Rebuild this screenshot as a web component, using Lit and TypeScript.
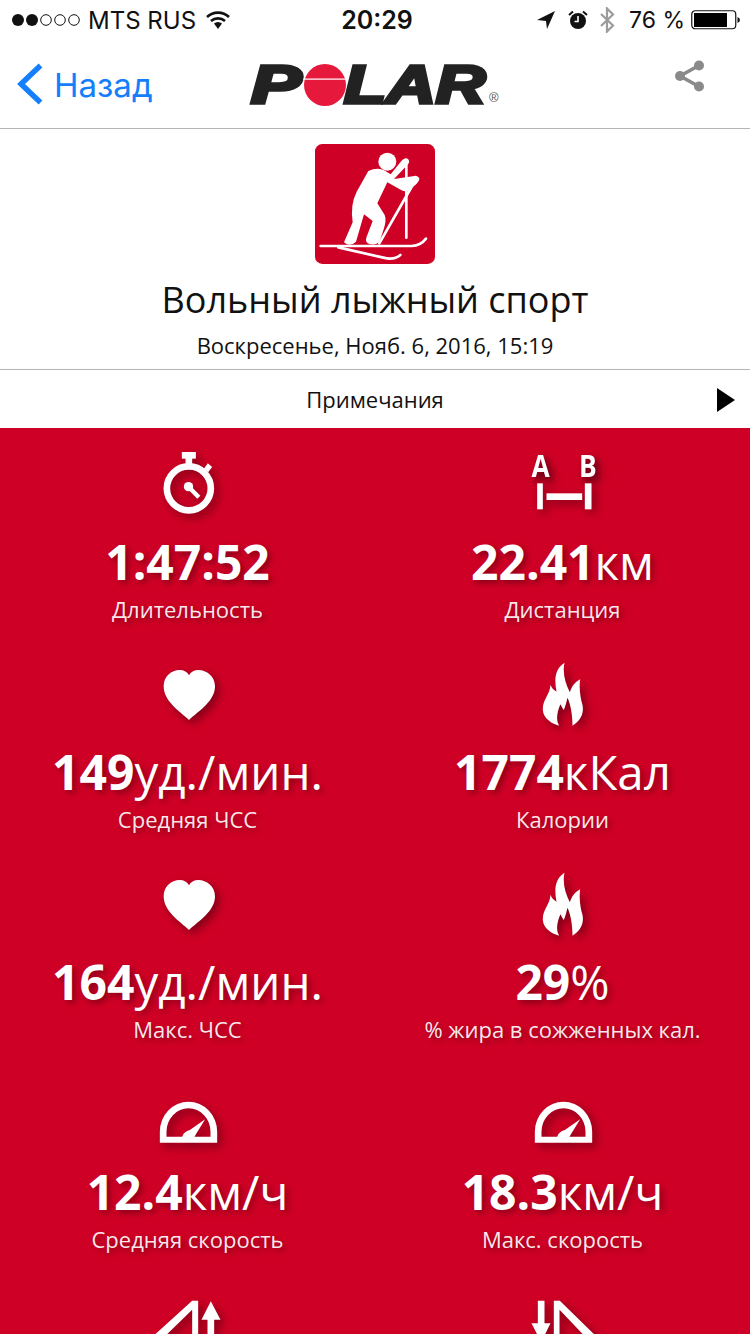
import { LitElement, html, css, svg } from "lit";
import { customElement } from "lit/decorators.js";

// icons are drawn in 3x coordinates on a 240x216 canvas
const heart = svg`<path d="M123 186 C95 160 47 130 47 85 C47 55 70 36 95 36 C108 36 118 42 123 52 C128 42 138 36 151 36 C176 36 201 55 201 85 C201 130 151 160 123 186 Z" fill="#fff"/>`;

const stopwatch = svg`<g transform="translate(-52.5,-24)">
  <circle cx="175" cy="145" r="66" fill="none" stroke="#fff" stroke-width="20"/>
  <rect x="154" y="36" width="42" height="20" fill="#fff"/>
  <rect x="165" y="50" width="20" height="22" fill="#fff"/>
  <path d="M220 86 L232 70 L245 81 L233 97 Z" fill="#fff"/>
  <circle cx="174" cy="140" r="14" fill="#fff"/>
  <path d="M174 140 L205 172" stroke="#fff" stroke-width="13" fill="none"/>
</g>`;

const abBars = svg`<g transform="translate(-37.5,-24)">
  <text x="90" y="112" text-anchor="middle" class="ab" transform="translate(90 0) scale(.86 1) translate(-90 0)">A</text>
  <text x="232" y="112" text-anchor="middle" class="ab" transform="translate(232 0) scale(.86 1) translate(-232 0)">B</text>
  <rect x="80" y="130" width="17" height="78" fill="#fff"/>
  <rect x="223" y="130" width="20" height="78" fill="#fff"/>
  <rect x="108" y="160" width="107" height="20" fill="#fff"/>
</g>`;

const flame = svg`<g transform="translate(-37.5,-24)">
  <path fill="#fff" d="M162 38 C135 55 130 85 138 125 C130 120 122 112 120 104 C118 135 95 150 97 180 C98 205 125 222 146 227 C135 210 140 185 150 163 C154 172 158 178 160 180 C165 168 168 155 171 143 C181 165 186 195 186 227 C205 215 222 195 216 165 C210 145 205 115 209 88 C196 95 185 105 178 127 C165 100 155 70 162 38 Z"/>
</g>`;

const gauge = svg`<g transform="translate(-52.5,36)">
  <path fill="#fff" fill-rule="evenodd" d="M88 158 V125 A86 90 0 0 1 260 125 V158 Z M108 140 H155 Q160 125 178 120 L224 88 L198 130 L192 140 H240 V125 A66 70 0 0 0 108 125 Z"/>
</g>`;

const climb = svg`<g transform="translate(-52.5,3)">
  <path fill="#fff" d="M185 35 H203 V200 H185 V62 L95 150 L75 135 Z"/>
  <path fill="#fff" d="M241 37 L270 92 H251 V200 H231 V92 H213 Z"/>
</g>`;

const descent = svg`<g transform="translate(-1177.5,3)">
  <path fill="#fff" d="M1222 35 H1242 V103 H1260 L1232 160 L1203 103 H1222 Z"/>
  <path fill="#fff" d="M1270 35 H1288 L1400 145 L1380 160 L1287 62 V200 H1270 Z"/>
</g>`;

const rows = [
  [
    { icon: stopwatch, value: "1:47:52", unit: "", label: "Длительность" },
    { icon: abBars, value: "22.41", unit: "км", label: "Дистанция" },
  ],
  [
    { icon: heart, value: "149", unit: "уд./мин.", label: "Средняя ЧСС" },
    { icon: flame, value: "1774", unit: "кКал", label: "Калории" },
  ],
  [
    { icon: heart, value: "164", unit: "уд./мин.", label: "Макс. ЧСС" },
    { icon: flame, value: "29", unit: "%", label: "% жира в сожженных кал." },
  ],
  [
    { icon: gauge, value: "12.4", unit: "км/ч", label: "Средняя скорость" },
    { icon: gauge, value: "18.3", unit: "км/ч", label: "Макс. скорость" },
  ],
];

@customElement("app-root")
export class AppRoot extends LitElement {
  static styles = css`
    :host {
      display: block;
      height: 1334px;
      overflow: hidden;
      background: #fff;
      font-family: "Open Sans", sans-serif;
      color: #111;
    }

    .status {
      display: grid;
      grid-template-columns: 1fr auto 1fr;
      align-items: center;
      height: 40px;
      font-family: Inter, sans-serif;
      font-size: 25px;
      color: #111;
    }
    .status-left,
    .status-right {
      display: flex;
      align-items: center;
    }
    .status-left {
      padding-left: 12px;
    }
    .carrier {
      margin-left: 8px;
      width: 106px;
      font-size: 24px;
      white-space: nowrap;
    }
    .wifi {
      margin-left: 12px;
    }
    .time {
      font-weight: 600;
      padding-left: 4px;
    }
    .status-right {
      justify-content: flex-end;
      padding-right: 10px;
    }
    .status-right svg {
      display: block;
    }
    .pct {
      margin: 0 6px 0 14px;
      font-size: 23px;
      white-space: nowrap;
    }

    .nav {
      position: relative;
      display: flex;
      align-items: center;
      justify-content: space-between;
      height: 89px;
      padding: 0 44px 0 17px;
      box-sizing: border-box;
      border-bottom: 1px solid #b4b4b4;
    }
    .back {
      display: flex;
      align-items: center;
      gap: 11px;
      color: #147efb;
      font-family: Inter, sans-serif;
      font-size: 33px;
      margin-top: 2px;
    }
    .back svg {
      margin-top: -3px;
    }
    .share {
      margin-bottom: 17px;
    }
    .logo {
      position: absolute;
      left: 250px;
      top: 24px;
      width: 250px;
      height: 42px;
      font-family: "Liberation Sans", sans-serif;
      font-weight: 700;
      font-style: italic;
      font-size: 53px;
      line-height: 42px;
      color: #222;
      -webkit-text-stroke: 3.5px #222;
    }
    .logo span,
    .logo svg {
      position: absolute;
      top: 0;
    }
    .logo .p {
      left: 1px;
      transform: scaleX(1.42);
      transform-origin: left;
    }
    .logo .lar {
      left: 94px;
      transform: scaleX(1.3);
      transform-origin: left;
    }
    .logo svg {
      left: 53px;
      top: 0;
    }
    .logo .reg {
      left: 239px;
      top: 27px;
      font-size: 13px;
      line-height: 14px;
      font-weight: 400;
      font-style: normal;
      color: #555;
      -webkit-text-stroke: 0;
    }

    .head {
      display: flex;
      flex-direction: column;
      align-items: center;
      height: 241px;
      box-sizing: border-box;
      padding-top: 15px;
      border-bottom: 1px solid #b4b4b4;
    }
    .sport {
      display: block;
      width: 120px;
      height: 120px;
    }
    .title {
      font-size: 36px;
      line-height: 44px;
      margin-top: 14px;
    }
    .date {
      font-size: 22px;
      line-height: 30px;
      margin-top: 8px;
    }

    .notes {
      display: flex;
      align-items: center;
      justify-content: center;
      position: relative;
      height: 58px;
      font-size: 22px;
    }
    .notes svg {
      position: absolute;
      right: 15px;
      top: 18px;
    }

    .stats {
      display: grid;
      grid-template-columns: 1fr 1fr;
      background: #cf0025;
      color: #fff;
      grid-auto-rows: 210px;
    }
    .cell {
      display: flex;
      flex-direction: column;
      align-items: center;
      padding-top: 20px;
      box-sizing: border-box;
      text-shadow: 3px 3px 6px rgba(0, 0, 0, 0.35);
    }
    .cell svg {
      display: block;
      width: 80px;
      height: 72px;
      overflow: visible;
      filter: drop-shadow(4px 4px 5px rgba(0, 0, 0, 0.38));
    }
    .ab {
      font-family: "Open Sans", sans-serif;
      font-weight: 700;
      font-size: 92px;
      fill: #fff;
    }
    .metric {
      margin-top: 15px;
      height: 54px;
      line-height: 54px;
      font-size: 48px;
      font-weight: 700;
      white-space: nowrap;
    }
    .metric small {
      font-size: 47.5px;
      font-weight: 400;
    }
    .label {
      margin-top: 5px;
      line-height: 30px;
      font-size: 22px;
      color: rgba(255, 255, 255, 0.92);
      white-space: nowrap;
    }
  `;

  renderStatus() {
    return html`
      <div class="status">
        <div class="status-left">
          <svg width="68" height="14" viewBox="0 0 68 14">
            <circle cx="6" cy="7" r="6" fill="#111" />
            <circle cx="20" cy="7" r="6" fill="#111" />
            <circle cx="34" cy="7" r="5.3" fill="none" stroke="#111" />
            <circle cx="48" cy="7" r="5.3" fill="none" stroke="#111" />
            <circle cx="62" cy="7" r="5.3" fill="none" stroke="#111" />
          </svg>
          <span class="carrier">MTS RUS</span>
          <svg class="wifi" width="24" height="18" viewBox="0 0 24 18">
            <path d="M1 6 A16 16 0 0 1 23 6" fill="none" stroke="#111" stroke-width="2.6" />
            <path d="M5 10 A10.5 10.5 0 0 1 19 10" fill="none" stroke="#111" stroke-width="2.6" />
            <path d="M8 12.5 A6 6 0 0 1 16 12.5 L12 18 Z" fill="#111" />
          </svg>
        </div>
        <div class="time">20:29</div>
        <div class="status-right">
          <svg width="20" height="20" viewBox="0 0 20 20">
            <path d="M19 1 L1 10 L10 11 L11 19 Z" fill="#111" />
          </svg>
          <svg style="margin-left:12px" width="20" height="20" viewBox="0 0 20 20">
            <circle cx="10" cy="11" r="8" fill="#111" />
            <path d="M10 6 V11.5 H6.5" fill="none" stroke="#fff" stroke-width="1.6" />
            <path d="M1 5 L5 1.5 M19 5 L15 1.5" stroke="#111" stroke-width="2" />
          </svg>
          <svg style="margin-left:11px" width="16" height="26" viewBox="0 0 16 26">
            <path d="M2 7 L14 18.5 L8 24.5 V1.5 L14 7.5 L2 19" fill="none" stroke="#9b9b9b" stroke-width="2.2" />
          </svg>
          <span class="pct">76 %</span>
          <svg width="49" height="20" viewBox="0 0 49 20">
            <rect x=".75" y=".75" width="44" height="18" rx="3.5" fill="none" stroke="#111" stroke-width="1.2" />
            <rect x="3" y="3" width="33" height="14" fill="#000" />
            <path d="M46.5 7 Q49 8 49 10 Q49 12 46.5 13 Z" fill="#111" />
          </svg>
        </div>
      </div>
    `;
  }

  renderNav() {
    return html`
      <div class="nav">
        <div class="back">
          <svg width="26" height="42" viewBox="0 0 26 42">
            <path d="M23.5 2.5 L4 21 L23.5 39.5" fill="none" stroke="#147efb" stroke-width="5.4" />
          </svg>
          <span>Назад</span>
        </div>
        <div class="logo">
          <span class="p">P</span>
          <svg width="44" height="42" viewBox="0 0 44 42">
            <circle cx="22" cy="21" r="21" fill="#e6193c" />
            <rect x="0" y="14.5" width="44" height="1.2" fill="#fff" />
          </svg>
          <span class="lar">LAR</span>
          <span class="reg">®</span>
        </div>
        <svg class="share" width="32" height="32" viewBox="0 0 32 32">
          <path d="M25 5.5 L6 16 L25 26.5" fill="none" stroke="#8a8a8a" stroke-width="3.6" />
          <circle cx="25" cy="5.5" r="5" fill="#8a8a8a" />
          <circle cx="6" cy="16" r="5" fill="#8a8a8a" />
          <circle cx="25" cy="26.5" r="5" fill="#8a8a8a" />
        </svg>
      </div>
    `;
  }

  renderHead() {
    return html`
      <div class="head">
        <svg class="sport" viewBox="45 27 360 360">
          <rect x="45" y="27" width="360" height="360" rx="22" fill="#cf0025" />
          <circle cx="262" cy="80" r="27" fill="#fff" />
          <path
            fill="#fff"
            d="M205 108 Q238 92 262 112 L272 118 L304 78 Q316 64 326 74 Q330 82 322 90 L282 132 L338 124 Q352 118 358 130 Q358 140 346 150 L322 168 Q312 170 302 164 L262 142 L232 205 L254 240 Q260 255 252 280 L238 322 Q220 334 202 324 Q194 316 202 300 L218 258 L192 238 L168 320 Q150 338 132 322 L158 262 Q150 210 170 170 Z"
          />
          <g fill="none" stroke="#fff" stroke-width="8" stroke-linecap="round">
            <path d="M319 80 V308" />
            <path d="M338 150 L238 325" />
            <path d="M62 333 H335 Q362 332 378 311" />
            <path d="M115 337 L250 368 Q282 376 301 360" />
          </g>
        </svg>
        <div class="title">Вольный лыжный спорт</div>
        <div class="date">Воскресенье, Нояб. 6, 2016, 15:19</div>
      </div>
    `;
  }

  render() {
    return html`
      ${this.renderStatus()} ${this.renderNav()} ${this.renderHead()}
      <div class="notes">
        Примечания
        <svg width="18" height="24" viewBox="0 0 18 24"><path d="M0 0 L18 12 L0 24 Z" fill="#000" /></svg>
      </div>
      <div class="stats">
        ${rows.flat().map(
          (s) => html`
            <div class="cell">
              <svg viewBox="0 0 240 216">${s.icon}</svg>
              <div class="metric">${s.value}${s.unit ? html`<small>${s.unit}</small>` : ""}</div>
              <div class="label">${s.label}</div>
            </div>
          `,
        )}
        <div class="cell"><svg viewBox="0 0 240 216">${climb}</svg></div>
        <div class="cell"><svg viewBox="0 0 240 216">${descent}</svg></div>
      </div>
    `;
  }
}
